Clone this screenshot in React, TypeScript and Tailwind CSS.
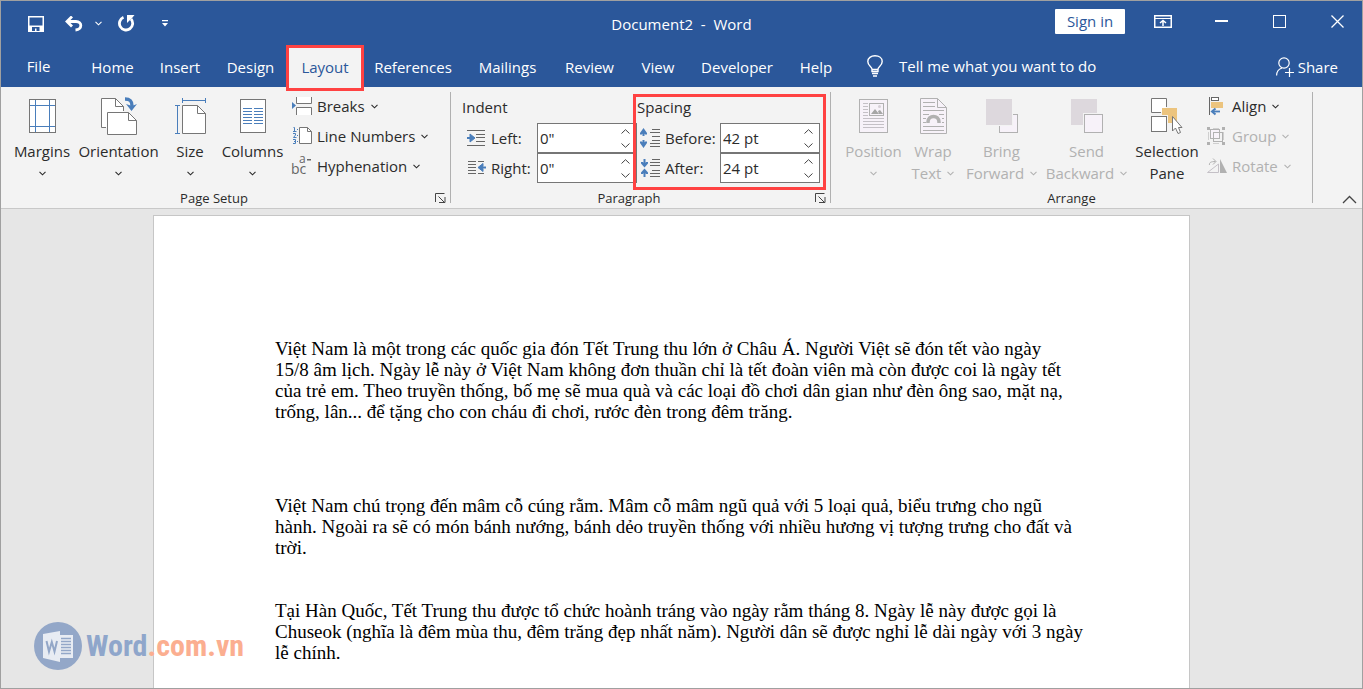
import type { ReactNode } from 'react';

interface ChildrenProps {
  children: ReactNode;
}

const tabs = [
  { label: 'Home', width: 'w-[69px]' },
  { label: 'Insert', width: 'w-[66px]' },
  { label: 'Design', width: 'w-[75px]' },
  { label: 'Layout', width: 'w-[74px]' },
  { label: 'References', width: 'w-[102px]' },
  { label: 'Mailings', width: 'w-[87px]' },
  { label: 'Review', width: 'w-[77px]' },
  { label: 'View', width: 'w-[60px]' },
  { label: 'Developer', width: 'w-[98px]' },
  { label: 'Help', width: 'w-[60px]' },
];

const paragraphs = [
  [
    'Việt Nam là một trong các quốc gia đón Tết Trung thu lớn ở Châu Á. Người Việt sẽ đón tết vào ngày',
    '15/8 âm lịch. Ngày lễ này ở Việt Nam không đơn thuần chỉ là tết đoàn viên mà còn được coi là ngày tết',
    'của trẻ em. Theo truyền thống, bố mẹ sẽ mua quà và các loại đồ chơi dân gian như đèn ông sao, mặt nạ,',
    'trống, lân... để tặng cho con cháu đi chơi, rước đèn trong đêm trăng.',
  ],
  [
    'Việt Nam chú trọng đến mâm cỗ cúng rằm. Mâm cỗ mâm ngũ quả với 5 loại quả, biểu trưng cho ngũ',
    'hành. Ngoài ra sẽ có món bánh nướng, bánh dẻo truyền thống với nhiều hương vị tượng trưng cho đất và',
    'trời.',
  ],
  [
    'Tại Hàn Quốc, Tết Trung thu được tổ chức hoành tráng vào ngày rằm tháng 8. Ngày lễ này được gọi là',
    'Chuseok (nghĩa là đêm mùa thu, đêm trăng đẹp nhất năm). Người dân sẽ được nghỉ lễ dài ngày với 3 ngày',
    'lễ chính.',
  ],
];

function Chevron() {
  return (
    <svg width="7" height="5" viewBox="0 0 7 5" fill="none" stroke="currentColor" strokeWidth="1.1" className="shrink-0">
      <path d="M0.5 0.8L3.5 3.8L6.5 0.8" />
    </svg>
  );
}

/* ---------- Page Setup icons ---------- */

function MarginsIcon() {
  return (
    <svg width="27" height="34" viewBox="0 0 27 34" fill="none" shapeRendering="crispEdges">
      <rect x="0.5" y="0.5" width="26" height="33" fill="#fff" stroke="#767676" />
      <path d="M6.5 1V33M20.5 1V33M1 6.5H26M1 27.5H26" stroke="#4a7ebb" />
    </svg>
  );
}

function OrientationIcon() {
  return (
    <svg width="36" height="38" viewBox="0 0 36 38" fill="none">
      <path d="M0.5 1.5H14.5L22.5 9.5V30.5H0.5Z" fill="#fff" />
      <path d="M5 30.5H0.5V1.5H14.5L22.5 9.5V14M14.5 1.5V9.5H22.5" stroke="#767676" />
      <path d="M6.5 15.5H27.5L35.5 23.5V37.5H6.5Z" fill="#fff" stroke="#767676" />
      <path d="M27.5 15.5V23.5H35.5" stroke="#767676" />
      <path d="M24 2C29 2 31 4 31 9" stroke="#4a7ebb" strokeWidth="3.4" />
      <path d="M25 7L30.5 14L36 7L31 9Z" fill="#4a7ebb" />
    </svg>
  );
}

function SizeIcon() {
  return (
    <svg width="31" height="36" viewBox="0 0 31 36" fill="none">
      <path d="M7.5 0V5M30.5 0V5M7.5 2.5H30.5M0 7.5H5M0 35.5H5M2.5 7.5V35.5" stroke="#4a7ebb" />
      <path d="M7.5 7.5H22.5L30.5 15.5V35.5H7.5Z" fill="#fff" stroke="#767676" />
      <path d="M22.5 7.5V15.5H30.5" stroke="#767676" />
    </svg>
  );
}

function ColumnsIcon() {
  return (
    <svg width="26" height="34" viewBox="0 0 26 34" fill="none" shapeRendering="crispEdges">
      <rect x="0.5" y="0.5" width="25" height="33" fill="#fff" stroke="#767676" />
      <path
        d="M3 9.5H12M3 12.5H12M3 15.5H12M3 18.5H12M3 21.5H12M3 24.5H12M14 9.5H23M14 12.5H23M14 15.5H23M14 18.5H23M14 21.5H23M14 24.5H23"
        stroke="#4a7ebb"
      />
    </svg>
  );
}

function BreaksIcon() {
  return (
    <svg width="21" height="18" viewBox="0 0 21 18" fill="none">
      <path d="M5 0H20V6.500H5ZM5 11H20V18H5Z" fill="#fff" />
      <path d="M4.500 0V6.500H19.500V0M4.500 18V10.500H19.500V18" stroke="#767676" />
      <path d="M0 5L4 8.500L0 12Z" fill="#4a7ebb" />
    </svg>
  );
}

function LineNumbersIcon() {
  return (
    <svg width="21" height="20" viewBox="0 0 21 20" fill="none">
      <path d="M1.500 1.500H2.500V5M1 5.500H4.500M1 7.500H3.500V9L1.500 11.500H4.500M1 13.500H3.500V17.500H1M2 15.500H3.500" stroke="#4a7ebb" />
      <path d="M5 3.500H6M5 9.500H6M5 15.500H6" stroke="#4a7ebb" />
      <path d="M7.500 1.500H15.500L19.500 5.500V17.500H7.500Z" fill="#fff" stroke="#767676" />
      <path d="M15.500 1.500V5.500H19.500" stroke="#767676" />
    </svg>
  );
}

function HyphenationIcon() {
  return (
    <svg width="21" height="20" viewBox="0 0 21 20" fill="#666" className="overflow-visible font-['Open_Sans',sans-serif]">
      <text x="-1" y="18" fontSize="14">bc</text>
      <text x="7" y="7" fontSize="12">a</text>
      <path d="M15 3H19V4.500H15Z" />
    </svg>
  );
}

/* ---------- Paragraph icons ---------- */

function IndentLeftIcon() {
  return (
    <svg width="20" height="18" viewBox="0 0 20 18" fill="none">
      <path d="M1 1.500H19M10 5.500H19M10 8.500H19M10 12.500H19M1 16.500H19" stroke="#666" />
      <path d="M1 9H7" stroke="#4a7ebb" strokeWidth="2" />
      <path d="M4 5L9 9L4 13V10L6 9L4 8Z" fill="#4a7ebb" stroke="#4a7ebb" />
    </svg>
  );
}

function IndentRightIcon() {
  return (
    <svg width="20" height="18" viewBox="0 0 20 18" fill="none">
      <path d="M2 2.500H10M12 2.500H18M2 5.500H10M2 8.500H10M2 11.500H10M2 14.500H10M12 14.500H18" stroke="#666" />
      <path d="M14 8.500H20" stroke="#4a7ebb" strokeWidth="2" />
      <path d="M17 4.500L12 8.500L17 12.500V9.500L15 8.500L17 7.500Z" fill="#4a7ebb" stroke="#4a7ebb" />
    </svg>
  );
}

function SpaceBeforeIcon() {
  return (
    <svg width="20" height="22" viewBox="0 0 20 22" fill="none">
      <path d="M12 2.500H20M10 5.500H20M12 9.500H20M12 13.500H20M10 16.500H20M10 19.500H20" stroke="#666" />
      <path d="M3.500 3V9M3.500 13V19" stroke="#4a7ebb" strokeWidth="2" />
      <path d="M0 6L3.500 1L7 6V7.500H5L3.500 6L2 7.500H0ZM0 16L3.500 21L7 16V14.500H5L3.500 16L2 14.500H0Z" fill="#4a7ebb" />
    </svg>
  );
}

function SpaceAfterIcon() {
  return (
    <svg width="20" height="20" viewBox="0 0 20 20" fill="none">
      <path d="M12 1.500H20M10 4.500H20M10 7.500H20M12 12.500H20M10 15.500H20M10 18.500H20" stroke="#666" />
      <path d="M4.500 1V7M4.500 13V19" stroke="#4a7ebb" strokeWidth="2" />
      <path d="M1 4V5.500L4.500 9.500L8 5.500V4H6L4.500 5.500L3 4ZM1 16V14.500L4.500 10.500L8 14.500V16H6L4.500 14.500L3 16Z" fill="#4a7ebb" />
    </svg>
  );
}

/* ---------- Arrange icons ---------- */

function PositionIcon() {
  return (
    <svg width="29" height="34" viewBox="0 0 29 34" fill="none" shapeRendering="crispEdges">
      <rect x="0.5" y="0.5" width="28" height="33" fill="#f7f2f9" stroke="#b1b1b1" />
      <path d="M4 4.500H9M4 7.500H9M4 10.500H9M4 13.500H9M4 16.500H9M4 19.500H25M4 22.500H25M4 25.500H25M4 28.500H25" stroke="#c4c0c6" />
      <rect x="10.500" y="4.500" width="14" height="12" fill="#f7f2f9" stroke="#b1b1b1" />
      <path d="M12 15L16 10L20 15ZM19 12L21 11L24 15H20Z" fill="#a6a6a6" shapeRendering="auto" />
      <circle cx="20.500" cy="7.500" r="1.500" fill="#d5cfd6" shapeRendering="auto" />
    </svg>
  );
}

function WrapTextIcon() {
  return (
    <svg width="27" height="36" viewBox="0 0 27 36" fill="none">
      <path d="M0.500 0.500H17.500L26.500 9.500V35.500H0.500Z" fill="#f7f2f9" stroke="#b1b1b1" />
      <path d="M17.500 0.500V9.500H26.500" stroke="#b1b1b1" />
      <path
        d="M3 4.500H15M3 8.500H15M3 12.500H24M3 16.500H9M19 16.500H24M3 20.500H6M22 20.500H24M3 24.500H6M22 24.500H24M3 28.500H24M3 32.500H24"
        stroke="#b1b1b1"
      />
      <path d="M8 25V24C8 16.500 19 16.500 19 24V25" stroke="#b1b1b1" strokeWidth="3.500" />
    </svg>
  );
}

function BringForwardIcon() {
  return (
    <svg width="32" height="34" viewBox="0 0 32 34" fill="none" shapeRendering="crispEdges">
      <rect x="13.500" y="15.500" width="18" height="18" fill="#f7f2f9" stroke="#b1b1b1" />
      <rect width="27" height="27" fill="#f3f3f3" />
      <rect width="26" height="26" fill="#ddd8dd" />
    </svg>
  );
}

function SendBackwardIcon() {
  return (
    <svg width="32" height="34" viewBox="0 0 32 34" fill="none" shapeRendering="crispEdges">
      <rect width="26" height="26" fill="#ddd8dd" />
      <rect x="12" y="14" width="20" height="20" fill="#f3f3f3" />
      <rect x="13.500" y="15.500" width="18" height="18" fill="#f7f2f9" stroke="#b1b1b1" />
    </svg>
  );
}

function SelectionPaneIcon() {
  return (
    <svg width="32" height="36" viewBox="0 0 32 36" fill="none">
      <path d="M15.500 9V0.500H0.500V14.500H10" fill="#fff" stroke="#767676" />
      <rect x="0.500" y="18.500" width="15" height="15" fill="#fff" stroke="#767676" />
      <path d="M11 10H26V25H17V17H11Z" fill="#ecc47e" />
      <path d="M21.500 18.500V33L24.500 30L27 35.500L29.500 34.500L27.500 29.500H31Z" fill="#fff" stroke="#767676" />
    </svg>
  );
}

function AlignIcon() {
  return (
    <svg width="20" height="20" viewBox="0 0 20 20" fill="none">
      <path d="M2.500 1V19" stroke="#666" />
      <rect x="4.500" y="1.500" width="7" height="3" fill="#fff" stroke="#666" />
      <rect x="4" y="6" width="12" height="6" fill="#ecc47e" />
      <path d="M5 15.500H13" stroke="#4a7ebb" strokeWidth="1.800" />
      <path d="M8.500 12.500L5 15.500L8.500 18.500" stroke="#4a7ebb" strokeWidth="2" />
    </svg>
  );
}

function GroupIcon() {
  return (
    <svg width="20" height="20" viewBox="0 0 20 20" fill="none" shapeRendering="crispEdges">
      <rect x="3.500" y="3.500" width="9" height="9" fill="#f7f2f9" stroke="#b1b1b1" />
      <rect x="6.500" y="6.500" width="9" height="9" stroke="#b1b1b1" />
      <path d="M0 1H3V4H0ZM15 1H18V4H15ZM0 16H3V19H0ZM15 16H18V19H15Z" fill="#b1b1b1" />
      <path d="M6 2.500H12M6 17.500H12M1.500 6V14M16.500 6V14" stroke="#cfcfcf" />
    </svg>
  );
}

function RotateIcon() {
  return (
    <svg width="20" height="16" viewBox="0 0 20 16" fill="none">
      <path d="M0.500 14.500L11.500 6V14.500Z" stroke="#c4c0c6" />
      <path d="M13 1V15H20Z" fill="#b1b1b1" />
      <path d="M2.500 7C2 4.500 4 3.500 8.500 3.500M6 0.500L9 3.500L6 6.500" stroke="#b1b1b1" />
    </svg>
  );
}

/* ---------- Ribbon building blocks ---------- */

interface LargeButtonProps {
  icon: ReactNode;
  label: string;
  secondLine?: string;
  chevron?: boolean;
  width: string;
  disabled?: boolean;
}

function LargeButton({ icon, label, secondLine, chevron = true, width, disabled = false }: LargeButtonProps) {
  return (
    <button
      type="button"
      disabled={disabled}
      className={`flex shrink-0 flex-col items-center whitespace-nowrap pt-[5px] leading-[22px] disabled:text-[#b1b1b1] ${width}`}
    >
      <span className="mb-1 flex h-10 items-center">{icon}</span>
      <span>{label}</span>
      <span className="flex h-[22px] items-center gap-[6px]">
        {secondLine}
        {chevron && <Chevron />}
      </span>
    </button>
  );
}

interface SmallButtonProps {
  icon: ReactNode;
  label: string;
  disabled?: boolean;
}

function SmallButton({ icon, label, disabled = false }: SmallButtonProps) {
  return (
    <button type="button" disabled={disabled} className="flex h-[30px] items-center whitespace-nowrap disabled:text-[#b1b1b1]">
      <span className="flex w-[25px] items-center">{icon}</span>
      <span className="mr-[6px]">{label}</span>
      <Chevron />
    </button>
  );
}

interface SpinFieldProps {
  id: string;
  icon: ReactNode;
  label: string;
  value: string;
  labelWidth: string;
}

function SpinField({ id, icon, label, value, labelWidth }: SpinFieldProps) {
  return (
    <div className="flex h-[30px] items-center">
      <span className="flex w-[25px] items-center">{icon}</span>
      <label htmlFor={id} className={`whitespace-nowrap ${labelWidth}`}>
        {label}
      </label>
      <div className="flex h-[30px] w-[100px] border border-[#767676] bg-white">
        <input id={id} defaultValue={value} className="w-[78px] pl-[2px] outline-none" />
        <div className="flex flex-1 flex-col items-center pr-[2px] text-[#444]">
          <button type="button" aria-label={`Increase ${label}`} className="flex flex-1 items-center">
            <svg width="9" height="5" viewBox="0 0 9 5" fill="none" stroke="currentColor">
              <path d="M0.500 4.500L4.500 0.700L8.500 4.500" />
            </svg>
          </button>
          <button type="button" aria-label={`Decrease ${label}`} className="flex flex-1 items-center">
            <svg width="9" height="5" viewBox="0 0 9 5" fill="none" stroke="currentColor">
              <path d="M0.500 0.500L4.500 4.300L8.500 0.500" />
            </svg>
          </button>
        </div>
      </div>
    </div>
  );
}

interface RibbonGroupProps extends ChildrenProps {
  title: string;
  width: string;
  launcher?: boolean;
}

function RibbonGroup({ title, width, launcher = false, children }: RibbonGroupProps) {
  return (
    <section className={`flex shrink-0 ${width}`}>
      <div className="flex flex-1 flex-col pt-1">
        <div className="flex h-[97px]">{children}</div>
        <div className="flex h-5 items-center text-[13px]">
          <h2 className={launcher ? 'flex-1 pr-2 pt-[2px] text-center' : 'flex-1 pt-[2px] text-center'}>{title}</h2>
          {launcher && (
            <button type="button" aria-label={`${title} settings`} className="mr-1">
              <svg width="11" height="10" viewBox="0 0 11 10" fill="none" stroke="#444">
                <path d="M0.500 9V0.500H9.500M3.500 3.500L9 9M10 4V9.500H4" />
              </svg>
            </button>
          )}
        </div>
      </div>
      <div className="my-[5px] w-px bg-[#b0b0b0]" />
    </section>
  );
}

/* ---------- Window chrome ---------- */

function TitleBar() {
  return (
    <header className="grid h-11 grid-cols-[1fr_auto_1fr] items-center text-white">
      <div className="flex items-center pl-[27px] pt-px">
        <button type="button" aria-label="Save">
          <svg width="16" height="16" viewBox="0 0 16 16" fill="none">
            <rect x="0.750" y="0.750" width="14.500" height="14.500" stroke="#fff" strokeWidth="1.500" />
            <path d="M1 9.500H15V15H1Z" fill="#fff" />
            <path d="M4 11H11.500V15H8.500V12.500H7V15H4Z" fill="#2b579a" />
          </svg>
        </button>
        <button type="button" aria-label="Undo" className="ml-[21px]">
          <svg width="18" height="16" viewBox="0 0 18 16" fill="none" stroke="#fff" strokeWidth="2.800">
            <path d="M2 5.500H11C17.500 5.500 17.500 13.500 10.500 14" />
            <path d="M7 0.500L2 5.500L7 10.500" />
          </svg>
        </button>
        <button type="button" aria-label="Undo history" className="ml-3">
          <Chevron />
        </button>
        <button type="button" aria-label="Repeat" className="ml-4">
          <svg width="17" height="17" viewBox="0 0 17 17" fill="none" stroke="#fff">
            <path d="M5.500 2.300A6.600 6.600 0 1 0 13 4" strokeWidth="2.800" />
            <path d="M9 0H16.500L14.500 2.500L9 8Z" fill="#fff" stroke="none" />
          </svg>
        </button>
        <button type="button" aria-label="Customize toolbar" className="ml-[27px]">
          <svg width="6" height="7" viewBox="0 0 6 7" fill="#fff">
            <path d="M0 0H6V1.300H0ZM0 3H6L3 6.500Z" />
          </svg>
        </button>
      </div>
      <h1 className="pt-[2px]">Document2&nbsp; -&nbsp; Word</h1>
      <div className="flex items-center justify-end pr-[18px]">
        <button type="button" className="mr-[29px] mb-1 h-[25px] w-[70px] rounded-[1px] bg-white pt-px text-[#2b579a]">
          Sign in
        </button>
        <button type="button" aria-label="Ribbon display options" className="mb-1 mr-[43px]">
          <svg width="18" height="13" viewBox="0 0 18 13" fill="none" stroke="#fff">
            <rect x="0.750" y="0.750" width="16.500" height="11.500" strokeWidth="1.500" />
            <path d="M1 3.500H17" />
            <path d="M9 11V6M6 8L9 5.500L12 8" strokeWidth="1.500" />
          </svg>
        </button>
        <button type="button" aria-label="Minimize" className="mb-1 mr-[45px]">
          <svg width="13" height="13" viewBox="0 0 13 13" stroke="#fff" strokeWidth="2">
            <path d="M0 6H13" />
          </svg>
        </button>
        <button type="button" aria-label="Maximize" className="mb-1 mr-[45px]">
          <svg width="13" height="13" viewBox="0 0 13 13" fill="none" stroke="#fff">
            <rect x="0.500" y="0.500" width="12" height="12" />
          </svg>
        </button>
        <button type="button" aria-label="Close" className="mb-1">
          <svg width="13" height="13" viewBox="0 0 13 13" stroke="#fff" strokeWidth="1.300">
            <path d="M0.500 0.500L12.500 12.500M12.500 0.500L0.500 12.500" />
          </svg>
        </button>
      </div>
    </header>
  );
}

function TabBar() {
  return (
    <nav className="flex h-[42px] text-white">
      <button type="button" className="w-[77px] shrink-0 pr-[2px]">
        File
      </button>
      {tabs.map((tab) =>
        tab.label === 'Layout' ? (
          <button key={tab.label} type="button" className={`relative shrink-0 bg-[#f3f3f3] pt-[2px] text-[#2b579a] ${tab.width}`}>
            {tab.label}
            <span className="absolute -inset-x-[2px] top-0 h-[46px] border-[3px] border-[#ff4242]" />
          </button>
        ) : (
          <button key={tab.label} type="button" className={`shrink-0 pt-[2px] ${tab.width}`}>
            {tab.label}
          </button>
        )
      )}
      <button type="button" className="ml-[21px] flex items-center gap-4 whitespace-nowrap">
        <svg width="16" height="22" viewBox="0 0 16 22" fill="none" stroke="#fff" strokeWidth="1.400">
          <path d="M5 16.500V14C5 11.500 0.800 11 0.800 6.500C0.800 3 4 0.800 8 0.800C12 0.800 15.200 3 15.200 6.500C15.200 11 11 11.500 11 14V16.500ZM5 14.500H11M5 18.500H11M6 21H10" />
        </svg>
        Tell me what you want to do
      </button>
      <button type="button" className="ml-auto mr-6 flex items-center gap-1 pt-[2px]">
        <svg width="18" height="20" viewBox="0 0 18 20" fill="none" stroke="#fff" strokeWidth="1.200">
          <circle cx="8" cy="6" r="5.200" />
          <path d="M0.600 18.500C0.600 14 3 12 6 11M13.500 11V20M9 15.500H18" />
        </svg>
        Share
      </button>
    </nav>
  );
}

function Ribbon() {
  return (
    <div className="flex border-b border-[#c8c8c8] bg-[#f3f3f3] text-[#2b2b2b]">
      <RibbonGroup title="Page Setup" width="w-[450px]" launcher>
        <div className="flex pl-[7px]">
          <LargeButton icon={<MarginsIcon />} label="Margins" width="w-[68px]" />
          <LargeButton icon={<OrientationIcon />} label="Orientation" width="w-[85px]" />
          <LargeButton icon={<SizeIcon />} label="Size" width="w-[58px]" />
          <LargeButton icon={<ColumnsIcon />} label="Columns" width="w-[67px]" />
        </div>
        <div className="ml-[6px]">
          <SmallButton icon={<BreaksIcon />} label="Breaks" />
          <SmallButton icon={<LineNumbersIcon />} label="Line Numbers" />
          <SmallButton icon={<HyphenationIcon />} label="Hyphenation" />
        </div>
      </RibbonGroup>

      <RibbonGroup title="Paragraph" width="w-[380px]" launcher>
        <fieldset className="ml-[11px] w-[175px]">
          <legend className="h-8 leading-8">Indent</legend>
          <div className="pl-1">
            <SpinField id="indent-left" icon={<IndentLeftIcon />} label="Left:" value={'0"'} labelWidth="w-[46px]" />
            <SpinField id="indent-right" icon={<IndentRightIcon />} label="Right:" value={'0"'} labelWidth="w-[46px]" />
          </div>
        </fieldset>
        <div className="relative w-[188px]">
          <fieldset>
            <legend className="h-8 leading-8">Spacing</legend>
            <div className="pl-[3px]">
              <SpinField id="space-before" icon={<SpaceBeforeIcon />} label="Before:" value="42 pt" labelWidth="w-[55px]" />
              <SpinField id="space-after" icon={<SpaceAfterIcon />} label="After:" value="24 pt" labelWidth="w-[55px]" />
            </div>
          </fieldset>
          <span className="pointer-events-none absolute -left-1 top-[3px] h-24 w-[193px] border-[3px] border-[#ff4242]" />
        </div>
      </RibbonGroup>

      <RibbonGroup title="Arrange" width="w-[482px]">
        <div className="flex pl-[11px]">
          <LargeButton icon={<PositionIcon />} label="Position" width="w-[63px]" disabled />
          <LargeButton icon={<WrapTextIcon />} label="Wrap" secondLine="Text" width="w-[56px]" disabled />
          <LargeButton icon={<BringForwardIcon />} label="Bring" secondLine="Forward" width="w-[81px]" disabled />
          <LargeButton icon={<SendBackwardIcon />} label="Send" secondLine="Backward" width="w-[89px]" disabled />
          <LargeButton icon={<SelectionPaneIcon />} label="Selection" secondLine="Pane" chevron={false} width="w-[72px]" />
        </div>
        <div className="ml-1">
          <SmallButton icon={<AlignIcon />} label="Align" />
          <SmallButton icon={<GroupIcon />} label="Group" disabled />
          <SmallButton icon={<RotateIcon />} label="Rotate" disabled />
        </div>
      </RibbonGroup>

      <button type="button" aria-label="Collapse the ribbon" className="mb-1 ml-auto mr-[5px] self-end">
        <svg width="15" height="9" viewBox="0 0 15 9" fill="none" stroke="#444" strokeWidth="1.300">
          <path d="M1 8L7.500 1.500L14 8" />
        </svg>
      </button>
    </div>
  );
}

function Watermark() {
  return (
    <div className="absolute bottom-[18px] left-[33px] flex items-center gap-1">
      <svg width="48" height="48" viewBox="0 0 48 48">
        <circle cx="24" cy="24" r="24" fill="#93a7c8" />
        <path d="M25 13H39V36H25Z" fill="#e8ecf3" />
        <path d="M27 16.500H37M27 19.500H37M27 22.500H37M27 25.500H37M27 28.500H37M27 31.500H37" stroke="#93a7c8" strokeWidth="1.500" />
        <path d="M9 12L26 9V40L9 36Z" fill="#e8ecf3" />
        <path d="M12.500 19L15 29.500L17.800 20L20.500 29.500L23 19" fill="none" stroke="#93a7c8" strokeWidth="2" />
      </svg>
      <span className="font-['Roboto_Condensed','Roboto',sans-serif] text-[30px] font-bold leading-[48px] text-[#8fa6cb]">
        Word<span className="text-[#fbae90]">.com.vn</span>
      </span>
    </div>
  );
}

export default function App() {
  return (
    <div className="flex min-h-screen flex-col border border-[#a0a0a0] bg-[#2b579a] font-['Open_Sans',sans-serif] text-[15px]">
      <TitleBar />
      <TabBar />
      <Ribbon />
      <main className="relative flex flex-1 flex-col bg-[#e6e6e6] pr-5 pt-[6px]">
        <article className="mx-auto w-full max-w-[1037px] flex-1 border border-b-0 border-[#c6c6c6] bg-white pl-[121px] pt-[122px] font-['Liberation_Serif',serif] text-[19px] leading-[21px] text-black">
          {paragraphs.map((lines, i) => (
            <p key={i} className={['mb-[73px]', 'mb-[42px]', 'mb-0'][i]}>
              {lines.map((line) => (
                <span key={line} className="block whitespace-nowrap">
                  {line}
                </span>
              ))}
            </p>
          ))}
        </article>
        <Watermark />
      </main>
    </div>
  );
}
